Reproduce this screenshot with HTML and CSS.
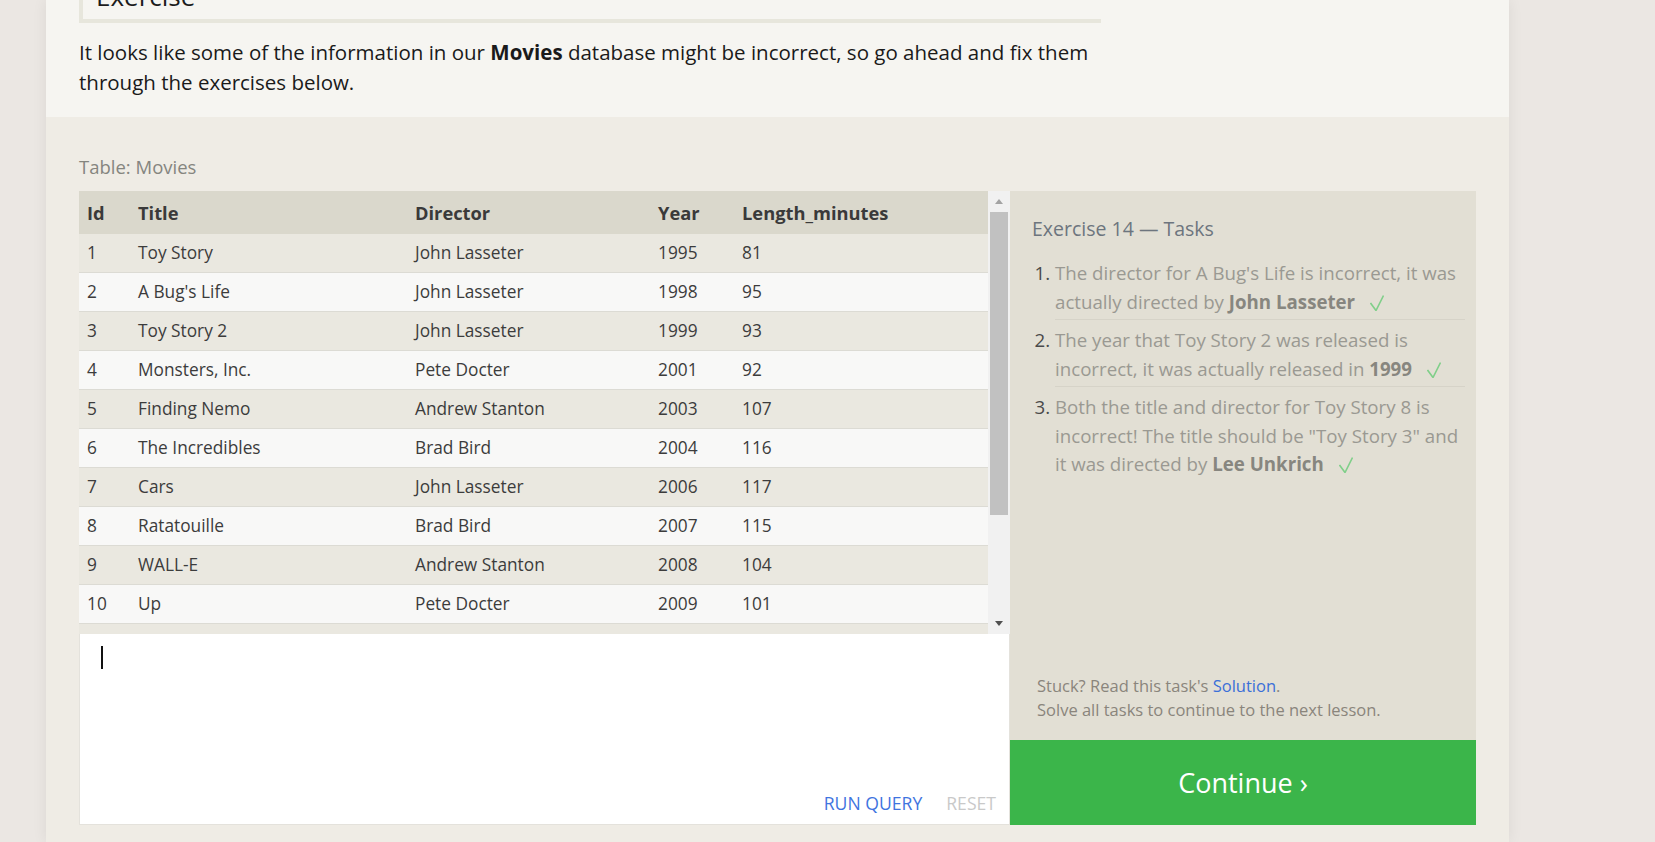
FILE: index.html
```html
<!DOCTYPE html>
<html lang="en">
<head>
<meta charset="utf-8">
<title>SQL Lesson – Exercise 14</title>
<link rel="stylesheet" href="styles.css">
</head>
<body>
<div class="page">
  <section class="intro">
    <div class="exercise-box"><h2 class="exercise-title">Exercise</h2></div>
    <p class="lead">It looks like some of the information in our <strong>Movies</strong> database might be incorrect, so go ahead and fix them through the exercises below.</p>
  </section>

  <section class="workspace">
    <div class="table-label">Table: Movies</div>
    <div class="work-grid">
      <div class="left-col">
        <div class="table-wrap">
          <div class="table-scroll">
            <table class="movies">
              <colgroup>
                <col class="c-id"><col class="c-title"><col class="c-director"><col class="c-year"><col class="c-length">
              </colgroup>
              <thead>
                <tr><th>Id</th><th>Title</th><th>Director</th><th>Year</th><th>Length_minutes</th></tr>
              </thead>
              <tbody>
                <tr><td>1</td><td>Toy Story</td><td>John Lasseter</td><td>1995</td><td>81</td></tr>
                <tr><td>2</td><td>A Bug's Life</td><td>John Lasseter</td><td>1998</td><td>95</td></tr>
                <tr><td>3</td><td>Toy Story 2</td><td>John Lasseter</td><td>1999</td><td>93</td></tr>
                <tr><td>4</td><td>Monsters, Inc.</td><td>Pete Docter</td><td>2001</td><td>92</td></tr>
                <tr><td>5</td><td>Finding Nemo</td><td>Andrew Stanton</td><td>2003</td><td>107</td></tr>
                <tr><td>6</td><td>The Incredibles</td><td>Brad Bird</td><td>2004</td><td>116</td></tr>
                <tr><td>7</td><td>Cars</td><td>John Lasseter</td><td>2006</td><td>117</td></tr>
                <tr><td>8</td><td>Ratatouille</td><td>Brad Bird</td><td>2007</td><td>115</td></tr>
                <tr><td>9</td><td>WALL-E</td><td>Andrew Stanton</td><td>2008</td><td>104</td></tr>
                <tr><td>10</td><td>Up</td><td>Pete Docter</td><td>2009</td><td>101</td></tr>
                <tr><td>11</td><td>Toy Story 3</td><td>Lee Unkrich</td><td>2010</td><td>103</td></tr>
                <tr><td>12</td><td>Cars 2</td><td>John Lasseter</td><td>2011</td><td>120</td></tr>
              </tbody>
            </table>
          </div>
          <div class="scrollbar">
            <div class="sb-btn"><span class="sb-arrow-up"></span></div>
            <div class="sb-thumb"></div>
            <div class="sb-rest"></div>
            <div class="sb-btn"><span class="sb-arrow-down"></span></div>
          </div>
        </div>
        <div class="editor">
          <span class="caret"></span>
          <div class="editor-actions">
            <span class="action run">RUN QUERY</span>
            <span class="action reset">RESET</span>
          </div>
        </div>
      </div>

      <div class="right-col">
        <div class="tasks">
          <div class="tasks-main">
            <h3 class="tasks-title">Exercise 14 — Tasks</h3>
            <ol class="task-list">
              <li>The director for A Bug's Life is incorrect, it was actually directed by <strong>John Lasseter</strong><svg class="check" viewBox="0 0 14 16" width="14" height="16"><path d="M0.5 8 L6 15.5 L13.5 0.5"/></svg></li>
              <li>The year that Toy Story 2 was released is incorrect, it was actually released in <strong>1999</strong><svg class="check" viewBox="0 0 14 16" width="14" height="16"><path d="M0.5 8 L6 15.5 L13.5 0.5"/></svg></li>
              <li>Both the title and director for Toy Story 8 is incorrect! The title should be "Toy Story 3" and it was directed by <strong>Lee Unkrich</strong><svg class="check" viewBox="0 0 14 16" width="14" height="16"><path d="M0.5 8 L6 15.5 L13.5 0.5"/></svg></li>
            </ol>
          </div>
          <div class="tasks-foot">
            <div>Stuck? Read this task's <a class="solution" href="#">Solution</a>.</div>
            <div>Solve all tasks to continue to the next lesson.</div>
          </div>
        </div>
        <button class="continue" type="button">Continue ›</button>
      </div>
    </div>
  </section>
</div>
</body>
</html>
```

FILE: styles.css
```css
html, body {
  margin: 0;
  padding: 0;
}

body {
  background: #ebe7e3;
  font-family: "Open Sans", "Noto Sans", sans-serif;
  height: 842px;
  overflow: hidden;
}

.page {
  width: 1463px;
  margin-left: 46px;
  background: #efece5;
  box-shadow: 0 0 14px rgba(0, 0, 0, 0.07);
  min-height: 842px;
}

/* ---------- intro band ---------- */
.intro {
  display: flow-root;
  background: #f6f5f1;
  height: 117px;
  padding: 0 33px;
  box-sizing: border-box;
}

.exercise-box {
  width: 1022px;
  height: 63px;
  margin-top: -40px;
  box-sizing: border-box;
  border-left: 4px solid #e7e6dc;
  border-bottom: 4px solid #e7e6dc;
  padding: 21px 0 0 13px;
}

.exercise-title {
  margin: 0;
  font-size: 26px;
  line-height: 30px;
  font-weight: 400;
  color: #1c1c1c;
}

.lead {
  width: 1022px;
  margin: 14px 0 0;
  font-size: 20.5px;
  line-height: 30px;
  color: #1a1a1a;
}

.lead strong {
  font-weight: 700;
}

/* ---------- workspace ---------- */
.workspace {
  padding: 38px 33px 17px;
}

.table-label {
  font-size: 18.5px;
  line-height: 24px;
  color: #85857f;
  margin-bottom: 12px;
}

.work-grid {
  display: grid;
  grid-template-columns: 931px 466px;
  height: 634px;
}

.left-col {
  display: flex;
  flex-direction: column;
}

.table-wrap {
  display: flex;
  height: 443px;
  background: #eae8e0;
}

.table-scroll {
  width: 909px;
  overflow: hidden;
}

.movies {
  width: 909px;
  border-collapse: collapse;
  table-layout: fixed;
  font-size: 17.3px;
  color: #3c3c3c;
}

.c-id { width: 51px; }
.c-title { width: 277px; }
.c-director { width: 243px; }
.c-year { width: 84px; }
.c-length { width: 254px; }

.movies th {
  background: #dad8cc;
  height: 43px;
  padding: 0 0 0 8px;
  text-align: left;
  font-weight: 700;
  font-size: 18.3px;
  color: #3a3a3a;
}

.movies td {
  padding: 8px 0 8px 8px;
  line-height: 22px;
  border-bottom: 1px solid #dcdbd4;
  white-space: nowrap;
}

.movies tbody tr:nth-child(odd) {
  background: #eae8e0;
}

.movies tbody tr:nth-child(even) {
  background: #f8f8f7;
}

/* fake scrollbar */
.scrollbar {
  width: 22px;
  background: #f1f1f1;
  display: flex;
  flex-direction: column;
}

.sb-btn {
  height: 21px;
  display: flex;
  align-items: center;
  justify-content: center;
  padding-right: 1px;
}

.sb-arrow-up {
  width: 0;
  height: 0;
  border-left: 4.5px solid transparent;
  border-right: 4.5px solid transparent;
  border-bottom: 5px solid #a3a3a3;
}

.sb-arrow-down {
  width: 0;
  height: 0;
  border-left: 4.5px solid transparent;
  border-right: 4.5px solid transparent;
  border-top: 5px solid #505050;
}

.sb-thumb {
  height: 303px;
  width: 18px;
  margin-left: 2px;
  background: #c1c1c1;
}

.sb-rest {
  flex: 1;
}

/* editor */
.editor {
  flex: 1;
  background: #ffffff;
  border: 1px solid #e4e2dc;
  border-top: none;
  display: flex;
  flex-direction: column;
  justify-content: space-between;
}

.caret {
  display: block;
  width: 2px;
  height: 23px;
  background: #111;
  margin: 12px 0 0 21px;
}

.editor-actions {
  display: flex;
  justify-content: flex-end;
  gap: 24px;
  padding: 0 13px 10px 0;
}

.action {
  font-size: 17.6px;
  line-height: 22px;
}

.run {
  color: #3f74e0;
}

.reset {
  color: #c9c9c9;
}

/* right column */
.right-col {
  display: flex;
  flex-direction: column;
}

.tasks {
  height: 549px;
  background: #e2dfd4;
  box-sizing: border-box;
  padding: 25px 11px 18px 22px;
  display: flex;
  flex-direction: column;
  justify-content: space-between;
}

.tasks-title {
  margin: 0;
  font-size: 19.5px;
  line-height: 26px;
  font-weight: 400;
  color: #6d757e;
}

.task-list {
  margin: 11px 0 0;
  padding-left: 23px;
}

.task-list li {
  font-size: 18.7px;
  line-height: 28.5px;
  color: #9a9992;
  padding: 6px 0 3px;
  border-bottom: 1px solid #d6d3c8;
}

.task-list li:last-child {
  border-bottom: none;
}

.task-list li::marker {
  color: #4a4a4a;
}

.task-list strong {
  color: #87867f;
  font-weight: 700;
}

.check {
  margin-left: 15px;
  vertical-align: -2px;
  fill: none;
  stroke: #7fcf89;
  stroke-width: 1.6;
}

.tasks-foot {
  padding-left: 5px;
  font-size: 16.5px;
  line-height: 24px;
  color: #8a857c;
}

.solution {
  color: #3b6fd8;
  text-decoration: none;
}

.continue {
  flex: 1;
  border: none;
  margin: 0;
  background: #3bb54a;
  color: #ffffff;
  font-family: inherit;
  font-size: 27px;
  font-weight: 400;
  cursor: pointer;
}
```
